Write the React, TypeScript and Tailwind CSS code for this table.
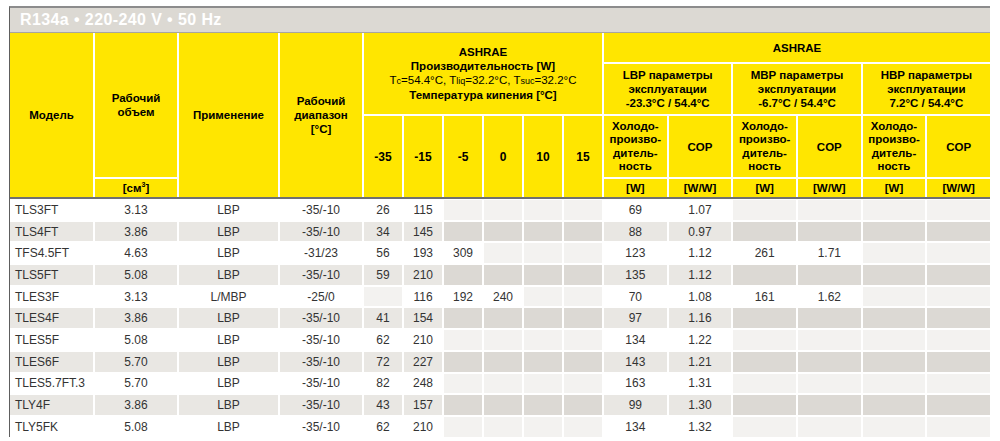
import React from 'react';

const cols = 'grid grid-cols-[83px_82px_99px_82px_repeat(6,38px)_repeat(6,1fr)] gap-[2px]';

// model, volume, use, range, -35, -15, -5, 0, 10, 15, LBP W, LBP COP, MBP W, MBP COP, HBP W, HBP COP
const rows: string[][] = [
    ['TLS3FT', '3.13', 'LBP', '-35/-10', '26', '115', '', '', '', '', '69', '1.07', '', '', '', ''],
    ['TLS4FT', '3.86', 'LBP', '-35/-10', '34', '145', '', '', '', '', '88', '0.97', '', '', '', ''],
    ['TFS4.5FT', '4.63', 'LBP', '-31/23', '56', '193', '309', '', '', '', '123', '1.12', '261', '1.71', '', ''],
    ['TLS5FT', '5.08', 'LBP', '-35/-10', '59', '210', '', '', '', '', '135', '1.12', '', '', '', ''],
    ['TLES3F', '3.13', 'L/MBP', '-25/0', '', '116', '192', '240', '', '', '70', '1.08', '161', '1.62', '', ''],
    ['TLES4F', '3.86', 'LBP', '-35/-10', '41', '154', '', '', '', '', '97', '1.16', '', '', '', ''],
    ['TLES5F', '5.08', 'LBP', '-35/-10', '62', '210', '', '', '', '', '134', '1.22', '', '', '', ''],
    ['TLES6F', '5.70', 'LBP', '-35/-10', '72', '227', '', '', '', '', '143', '1.21', '', '', '', ''],
    ['TLES5.7FT.3', '5.70', 'LBP', '-35/-10', '82', '248', '', '', '', '', '163', '1.31', '', '', '', ''],
    ['TLY4F', '3.86', 'LBP', '-35/-10', '43', '157', '', '', '', '', '99', '1.30', '', '', '', ''],
    ['TLY5FK', '5.08', 'LBP', '-35/-10', '62', '210', '', '', '', '', '134', '1.32', '', '', '', ''],
];

const temps = ['-35', '-15', '-5', '0', '10', '15'];
const tempCols = ['col-start-5', 'col-start-6', 'col-start-7', 'col-start-8', 'col-start-9', 'col-start-10'];

const H = 'bg-[#ffe600] flex items-center justify-center text-center font-bold text-[11.5px] leading-[14px] text-black';

function Cold() {
    return (
        <span className="leading-[13.5px]">
            Холодо-<br />произво-<br />дитель-<br />ность
        </span>
    );
}

function Header() {
    const groups = [
        { c: 'col-start-11', c2: 'col-start-12', title: 'LBP параметры', range: '-23.3°C / 54.4°C' },
        { c: 'col-start-13', c2: 'col-start-14', title: 'MBP параметры', range: '-6.7°C / 54.4°C' },
        { c: 'col-start-15', c2: 'col-start-16', title: 'HBP параметры', range: '7.2°C / 54.4°C' },
    ];

    return (
        <div className={`${cols} grid-rows-[29px_50px_61px_18px] bg-white border-b-2 border-[#707070]`}>
            <div className={`${H} col-start-1 row-start-1 row-span-4`}>Модель</div>
            <div className={`${H} col-start-2 row-start-1 row-span-3`}>
                Рабочий<br />объем
            </div>
            <div className={`${H} col-start-2 row-start-4`}>
                [см<sup className="text-[7px]">3</sup>]
            </div>
            <div className={`${H} col-start-3 row-start-1 row-span-4`}>Применение</div>
            <div className={`${H} col-start-4 row-start-1 row-span-4`}>
                Рабочий<br />диапазон<br />[°C]
            </div>

            <div className={`${H} col-start-5 col-span-6 row-start-1 row-span-2 flex-col`}>
                <span>ASHRAE</span>
                <span>Производительность [W]</span>
                <span className="font-normal">
                    T<span className="text-[9px]">c</span>=54.4°C, T<span className="text-[9px]">liq</span>=32.2°C,
                    T<span className="text-[9px]">suc</span>=32.2°C
                </span>
                <span>Температура кипения [°C]</span>
            </div>

            {temps.map((t, i) => (
                <div key={t} className={`${H} ${tempCols[i]} row-start-3 row-span-2 text-[12px]`}>
                    {t}
                </div>
            ))}

            <div className={`${H} col-start-11 col-span-6 row-start-1`}>ASHRAE</div>

            {groups.map((g) => (
                <React.Fragment key={g.title}>
                    <div className={`${H} ${g.c} col-span-2 row-start-2`}>
                        <span>
                            {g.title}<br />эксплуатации<br />{g.range}
                        </span>
                    </div>
                    <div className={`${H} ${g.c} row-start-3`}>
                        <Cold />
                    </div>
                    <div className={`${H} ${g.c2} row-start-3`}>COP</div>
                    <div className={`${H} ${g.c} row-start-4`}>[W]</div>
                    <div className={`${H} ${g.c2} row-start-4`}>[W/W]</div>
                </React.Fragment>
            ))}
        </div>
    );
}

function Body() {
    return (
        <div className={`${cols} auto-rows-[19.7px] bg-white pt-[1px]`}>
            {rows.map((r, ri) => {
                const shaded = ri % 2 === 1;
                return r.map((v, ci) => {
                    let bg = shaded ? 'bg-[#e9e7e3]' : 'bg-white';
                    if (v === '') bg = shaded ? 'bg-[#dcd9d4]' : 'bg-[#f3f2f0]';
                    const align = ci === 0 ? 'justify-start pl-[5px]' : 'justify-center';
                    return (
                        <div
                            key={`${ri}-${ci}`}
                            className={`${bg} ${align} flex items-center text-[12px] text-[#333333] whitespace-nowrap`}
                        >
                            {v}
                        </div>
                    );
                });
            })}
        </div>
    );
}

export default function App() {
    return (
        <div className="min-h-screen bg-white pt-[6px] pl-[9px] font-['Liberation_Sans',Arial,sans-serif]">
            <div className="w-[981px] border-t-2 border-l border-t-[#8c8c8c] border-l-[#5e5e5e]">
                {/* Title bar */}
                <div className="h-[25px] bg-[#dcd9d3] border-b border-[#a8a59f] flex items-center pl-[10px]">
                    <span className="text-white font-bold text-[16px] tracking-[0.4px]">R134a • 220-240 V • 50 Hz</span>
                </div>
                <Header />
                <Body />
            </div>
        </div>
    );
}
